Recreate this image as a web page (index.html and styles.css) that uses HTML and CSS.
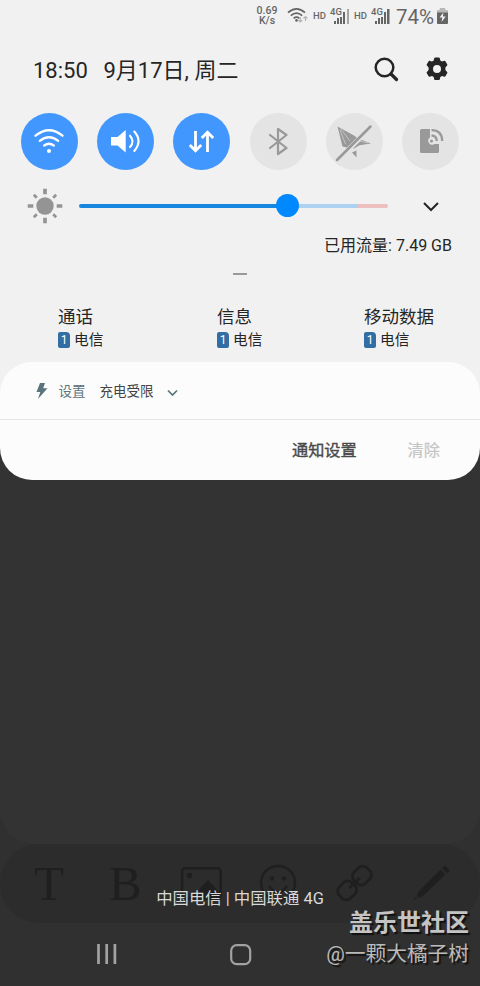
FILE: index.html
```html
<!DOCTYPE html>
<html lang="zh-CN">
<head>
<meta charset="utf-8">
<title>通知面板</title>
<link rel="stylesheet" href="styles.css">
</head>
<body>
<main class="screen">
  <section class="panel">
    <div class="status">
      <div class="speed"><span>0.69</span><span>K/s</span></div>
      <svg class="st-wifi" width="24" height="18" viewBox="0 0 24 18" fill="none" stroke="#656565" stroke-width="1.7"><path d="M1 5.6Q9.500-2 18 5.600M3.800 8.700q5.700-5 11.400 0M6.600 11.300q2.900-2.400 5.800 0"/><circle cx="9.500" cy="13.400" r="1.300" fill="#656565" stroke="none"/><path d="M13.300 10v5m-2-2 2 2 2-2M18.500 14V9.500m-2 2 2-2 2 2" stroke="#b5b5b5" stroke-width="1.200"/></svg>
      <span class="hd">HD</span>
      <div class="signal"><span class="gen">4G</span><svg width="15" height="15" viewBox="0 0 15 15"><path fill="#656565" d="M0 12h2v3H0zM3 9h2v6H3zM6 6h2v9H6zM9 3h2v12H9z"/><path fill="#a5a5a5" d="M13 0h2v15h-2z"/></svg></div>
      <span class="hd hd-two">HD</span>
      <div class="signal"><span class="gen">4G</span><svg width="15" height="15" viewBox="0 0 15 15"><path fill="#656565" d="M0 12h2v3H0zM3 9h2v6H3zM6 6h2v9H6zM9 3h2v12H9zM12 0h2.500v15H12z"/></svg></div>
      <span class="percent">74%</span>
      <svg class="battery" width="11" height="16" viewBox="0 0 12 16" preserveAspectRatio="none"><path d="M3 0h6v2h2q1 0 1 1v2H0V3q0-1 1-1h2z" fill="#b8b8b8"/><path d="M0 4.500h12V15q0 1-1 1H1q-1 0-1-1z" fill="#656565"/><path d="m7 4.500-4.200 5h3L5 14l4.500-5.500H6.400z" fill="#f1f1f1"/></svg>
    </div>

    <header class="header">
      <span class="time">18:50</span><span class="date">9月17日, 周二</span>
      <svg class="search" width="26" height="26" viewBox="0 0 26 26" fill="none" stroke="#252525"><circle cx="11.500" cy="11.500" r="8.800" stroke-width="2.500"/><path d="m18 18 5.500 5.500" stroke-width="3.200" stroke-linecap="round"/></svg>
      <svg class="gear" width="26" height="26" viewBox="0 0 26 26"><path fill="#252525" fill-rule="evenodd" d="m9.700 4.500.6-2.400q.3-.6 1-.6h3.400q.7 0 1 .6l.6 2.400 1.700 1 2.400-.7q.7-.1 1 .4l1.900 3.200q.3.600-.2 1.200L21.400 11.500v2.500l1.700 1.900q.5.600.2 1.200l-1.900 3.200q-.4.600-1 .4l-2.400-.7-1.700 1-.6 2.400q-.3.600-1 .6h-3.400q-.7 0-1-.6l-.6-2.400-1.700-1-2.400.7q-.7.200-1-.4l-1.900-3.200q-.3-.6.200-1.200L4.600 14v-2.500L2.900 9.600q-.5-.6-.2-1.200l1.900-3.200q.4-.5 1-.4l2.400.7zM13 9a4 4 0 1 0 0 8 4 4 0 0 0 0-8z"/></svg>
    </header>

    <div class="toggles">
      <div class="toggle on"><svg width="56" height="56" viewBox="0 0 56 56" fill="none" stroke="#fff" stroke-width="2.300" stroke-linecap="round"><path d="M14.500 22.700Q28 11.700 41.500 22.700M18.800 27.900Q28 20.500 37.200 27.900M23.200 32.500q4.800-3.500 9.600 0"/><circle cx="28" cy="38" r="2" fill="#fff" stroke="none"/></svg></div>
      <div class="toggle on"><svg width="56" height="56" viewBox="0 0 56 56" fill="none" stroke="#fff" stroke-width="2.100" stroke-linecap="round"><path d="M14 24h6.500l8.200-7v22.500l-8.200-7H14z" fill="#fff" stroke="none"/><path d="M33 22.700q5 5.800 0 11.300M37.300 18.500q8.500 9.500 0 19.500"/></svg></div>
      <div class="toggle on"><svg width="56" height="56" viewBox="0 0 56 56" fill="none" stroke="#fff" stroke-width="2.800"><path d="M22.500 18v19.500M16.800 32l5.700 5.700 5.700-5.700M34.500 39V19.500M28.800 25l5.700-5.700 5.700 5.700"/></svg></div>
      <div class="toggle"><svg width="56" height="56" viewBox="0 0 56 56" fill="none" stroke="#999" stroke-width="2.200" stroke-linejoin="round" stroke-linecap="round"><path d="m20 22 16.500 13-8.500 6V16l8.500 6L20 35"/></svg></div>
      <div class="toggle"><svg width="56" height="56" viewBox="0 0 56 56"><path fill="#999" d="M11.500 13.500 28 22.500l3.500 2.700L45 30.500l-11.500 1.700-5.500 3.300-7-1-4.500-1z"/><path d="m14 17 5.500 14M14.500 15.500 24 28M30 27l12 3" stroke="#d5d5d5" stroke-width=".7"/><path fill="#999" d="m26 39.500 4.500-2v7z"/><path d="m11.500 47.500 34-34" stroke="#e4e4e4" stroke-width="5"/><path d="m11 47 33.500-33.500" stroke="#999" stroke-width="2.500" stroke-linecap="round"/></svg></div>
      <div class="toggle"><svg width="56" height="56" viewBox="0 0 56 56"><path fill="#999" d="M19.500 16H28v8.600a3.700 3.700 0 1 0 4.300 6.400h4.700v7.500q0 1.500-1.500 1.500H19.500q-1.500 0-1.500-1.500v-21q0-1.500 1.500-1.500z"/><circle cx="29.500" cy="28" r="1.600" fill="#999"/><path d="M29.500 22.500q5 0 5.300 5.500M29.500 17.200q10.500 0 10.700 10.800" fill="none" stroke="#999" stroke-width="2.300"/></svg></div>
    </div>

    <div class="brightness">
      <svg class="sun" width="36" height="36" viewBox="0 0 36 36"><circle cx="18" cy="18" r="8.700" fill="#949494"/><path d="M18 .7v5.600M18 29.700v5.600M.7 18h5.600M29.700 18h5.600" stroke="#949494" stroke-width="3.700"/><path d="m6.800 6.800 3 3M26.200 26.200l3 3M6.800 29.200l3-3M26.200 9.800l3-3" stroke="#949494" stroke-width="2.700"/></svg>
      <div class="track"><i class="filled"></i><i class="rest"></i><i class="high"></i><b class="thumb"></b></div>
      <svg class="expand" width="18" height="12" viewBox="0 0 18 12" fill="none" stroke="#252525" stroke-width="2"><path d="m2 2 7 7 7-7"/></svg>
    </div>
    <div class="usage">已用流量: 7.49 GB</div>
    <div class="handle"></div>

    <div class="sims">
      <div class="sim call"><div class="sim-title">通话</div><div class="carrier"><span class="chip">1</span>电信</div></div>
      <div class="sim message"><div class="sim-title">信息</div><div class="carrier"><span class="chip">1</span>电信</div></div>
      <div class="sim data"><div class="sim-title">移动数据</div><div class="carrier"><span class="chip">1</span>电信</div></div>
    </div>
  </section>

  <section class="card">
    <div class="notice">
      <svg class="bolt" width="12" height="16" viewBox="0 0 12 16"><path fill="#5a747b" d="M4 0h5L7.200 5.300H11.500L2 16l2.300-7H.5z"/></svg>
      <span class="app">设置</span><span class="message-text">充电受限</span>
      <svg class="more" width="11" height="8" viewBox="0 0 11 8" fill="none" stroke="#5a747b" stroke-width="1.700"><path d="m1 1.500 4.500 4.500L10 1.500"/></svg>
    </div>
    <div class="actions"><span class="notify">通知设置</span><span class="clear">清除</span></div>
  </section>

  <div class="page-behind"></div>
  <div class="toolbar">
    <span class="letter letter-t">T</span><span class="letter letter-b">B</span>
    <svg class="tool-svg" width="300" height="78" viewBox="0 0 300 78" fill="none" stroke="#1f1f1f" stroke-width="2.500"><rect x="2.200" y="24.200" width="38.500" height="30" rx="3"/><circle cx="9.500" cy="31.500" r="2.800" fill="#1f1f1f" stroke="none"/><path d="m11 54 8-8 3-4 6-6 13 14v4z" fill="#1f1f1f" stroke="none"/><circle cx="98" cy="39" r="17"/><path d="M89 42q9 13 18 0"/><circle cx="92" cy="34.500" r="2.200" fill="#1f1f1f" stroke="none"/><circle cx="104" cy="34.500" r="2.200" fill="#1f1f1f" stroke="none"/><g transform="rotate(-45 174.500 39)" stroke-width="2.800"><rect x="155" y="31" width="18" height="16" rx="6"/><rect x="176" y="31" width="18" height="16" rx="6"/><path d="M167 39h15"/></g><path d="m234 56 1-2.500 2.500.5zM237 50.500l2-3.500 21.500-21.500 5 5L243 52l-5 2zM262 24l2.800-2.500 5 5-2.600 2.700z" fill="#1f1f1f" stroke="none"/></svg>
  </div>
  <div class="operators">中国电信 | 中国联通 4G</div>
  <nav class="nav">
    <svg class="recents" width="20" height="20" viewBox="0 0 20 20" stroke="#a2a2a2" stroke-width="2.700"><path d="M1.500 0v20M9.700 0v20M17.900 0v20"/></svg>
    <svg class="home" width="22" height="22" viewBox="0 0 22 22" fill="none" stroke="#a2a2a2" stroke-width="2.200"><rect x="1.200" y="1.200" width="19" height="19" rx="5.500"/></svg>
  </nav>
  <div class="watermark"><div class="community">盖乐世社区</div><div class="author">@一颗大橘子树</div></div>
</main>
</body>
</html>
```
FILE: styles.css
```css
* { box-sizing: border-box; }
body { margin: 0; font-family: Roboto, "Noto Sans CJK SC", sans-serif; color: #252525; }
svg { display: block; flex: none; }
.screen { position: relative; width: 480px; height: 986px; overflow: hidden; background: linear-gradient(#333 0 800px, #303030 800px); white-space: nowrap; }
.panel { position: relative; height: 362px; background: #f1f1f1; }
/* Light backing continues behind the card's upper corners. */
.panel::after { content: ""; position: absolute; left: 0; top: 362px; width: 480px; height: 60px; background: #f1f1f1; }

.status { display: flex; height: 34px; padding-left: 256px; color: #656565; }
.speed { width: 22px; padding-top: 5px; display: flex; flex-direction: column; align-items: center; font-size: 10.500px; line-height: 12px; font-weight: 500; }
.speed span + span { margin-top: -2px; }
.st-wifi { margin: 7px 0 0 9px; }
.hd { width: 15px; margin: 10px 0 0 2px; font-size: 9.500px; line-height: 12px; font-weight: 500; }
.signal { position: relative; width: 20px; height: 16px; margin: 8px 0 0 2px; padding: 1px 0 0 4px; }
.gen { position: absolute; left: 0; top: -1px; font-size: 9.500px; line-height: 10px; font-weight: 500; background: #f1f1f1; }
.hd-two { margin-left: 4px; }
.percent { width: 38px; margin: 5px 0 0 5px; font-size: 20.500px; line-height: 24px; }
.battery { margin: 8px 0 0 3px; }

.header { display: flex; height: 72px; padding-left: 33px; font-size: 22px; line-height: 74px; }
.time { width: 70.500px; }
.date { width: 268.500px; }
.search { margin: 22px 0 0 1px; }
.gear { margin: 22px 0 0 25px; }

.toggles { display: flex; justify-content: space-between; height: 64px; margin: 0 21px; padding-top: 7px; }
.toggle { width: 57px; height: 57px; border-radius: 50%; background: #e4e4e4; }
.toggle.on { background: #4297ff; }

.brightness { display: flex; align-items: center; height: 72px; padding-left: 27px; }
.track { position: relative; display: flex; width: 309px; height: 4px; margin-left: 16px; }
.filled { width: 209px; background: #1787e0; border-radius: 2px 0 0 2px; }
.rest { width: 70px; background: #add1f0; }
.high { flex: 1; background: #edbfbe; border-radius: 0 2px 2px 0; }
.thumb { position: absolute; left: 197px; top: -10px; width: 23px; height: 23px; border-radius: 50%; background: #0089ff; }
.expand { margin: 1px 0 0 34px; }
.usage { height: 31px; padding-right: 28px; margin-top: -8px; text-align: right; font-size: 16px; line-height: 24px; }
.handle { width: 14px; height: 2px; margin: 8px 0 0 233px; background: #999; }

.sims { display: flex; padding: 30px 0 0 58px; }
.sim { flex: none; width: 159px; }
.sim.message { width: 147px; }
.sim.data { width: 100px; }
.sim-title { height: 25px; font-size: 17.500px; line-height: 24px; }
.carrier { display: flex; height: 20px; align-items: center; font-size: 14.700px; line-height: 20px; }
.chip { width: 12px; height: 16px; margin-right: 4px; border-radius: 2px 4px 2px 2px; background: #326da4; color: #fff; font-size: 12px; line-height: 16px; text-align: center; }

.card { position: relative; height: 118px; overflow: hidden; border-radius: 32px; background: #fcfcfc; }
.notice { display: flex; height: 58px; padding-left: 36px; border-bottom: 1px solid #e5e5e5; font-size: 13.500px; line-height: 59px; }
.bolt { margin-top: 21px; }
.app { width: 41px; margin-left: 10.500px; color: #5a747b; }
.message-text { width: 54px; color: #444; }
.more { margin: 27px 0 0 13px; }
.actions { display: flex; padding-left: 292px; font-size: 16.200px; line-height: 62px; }
.notify { width: 115.500px; color: #4a4a4a; -webkit-text-stroke: .4px #4a4a4a; }
.clear { color: #c5c5c5; -webkit-text-stroke: .2px #c5c5c5; }

.page-behind { height: 364px; border-radius: 0 0 34px 34px; background: #333; }
.toolbar { display: flex; height: 79px; border-radius: 39px; background: #2c2c2c; color: #1f1f1f; font-family: "Liberation Serif", serif; font-size: 49px; line-height: 80px; }
.letter-t { width: 75px; padding-left: 34px; }
.letter-b { width: 105px; padding-left: 34px; }
.operators { position: absolute; left: 0; top: 887px; width: 480px; text-align: center; color: #d8d8d8; font-size: 16.400px; line-height: 24px; }
.nav { display: flex; padding: 21px 0 0 97px; }
.home { margin-left: 113px; }
.watermark { position: absolute; right: 11px; top: 907px; text-align: right; text-shadow: 2px 2px 1px #111; color: #c4c4c4; }
.community { font-size: 24px; line-height: 32px; font-weight: 700; }
.author { font-size: 20.700px; line-height: 30px; color: #bababa; }
```
